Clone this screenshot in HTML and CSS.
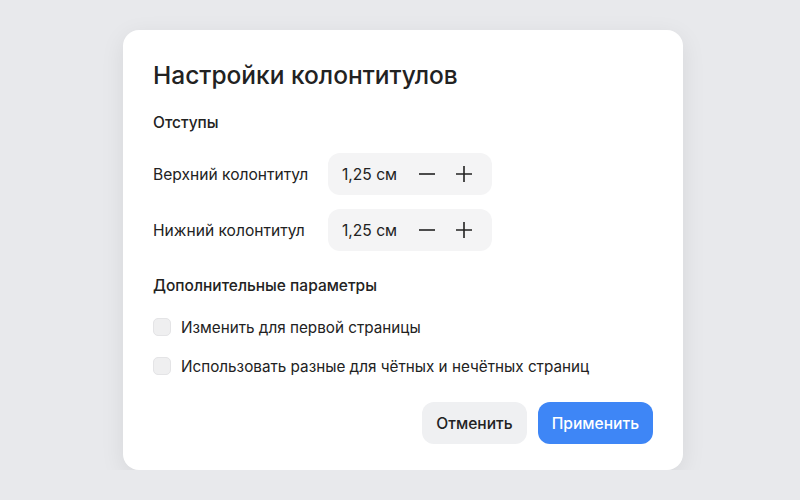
FILE: index.html
```html
<!DOCTYPE html>
<html lang="ru">
<head>
  <meta charset="UTF-8" />
  <meta name="viewport" content="width=device-width, initial-scale=1.0"/>
  <title>Настройки колонтитулов</title>
  <link rel="stylesheet" href="styles.css">
</head>
<body>
  <div class="dialog">
    <h2 class="dialog-title">Настройки колонтитулов</h2>

    <h3 class="section-title">Отступы</h3>

    <div class="margin-rows">
      <div class="margin-row">
        <span class="margin-label">Верхний колонтитул</span>
        <div class="stepper">
          <span class="stepper-value">1,25 см</span>
          <button class="stepper-btn" aria-label="Уменьшить">
            <svg width="18" height="18" viewBox="0 0 18 18"><path d="M1 9h16" stroke="#222" stroke-width="1.6" fill="none"/></svg>
          </button>
          <button class="stepper-btn" aria-label="Увеличить">
            <svg width="18" height="18" viewBox="0 0 18 18"><path d="M1 9h16M9 1v16" stroke="#222" stroke-width="1.6" fill="none"/></svg>
          </button>
        </div>
      </div>

      <div class="margin-row">
        <span class="margin-label">Нижний колонтитул</span>
        <div class="stepper">
          <span class="stepper-value">1,25 см</span>
          <button class="stepper-btn" aria-label="Уменьшить">
            <svg width="18" height="18" viewBox="0 0 18 18"><path d="M1 9h16" stroke="#222" stroke-width="1.6" fill="none"/></svg>
          </button>
          <button class="stepper-btn" aria-label="Увеличить">
            <svg width="18" height="18" viewBox="0 0 18 18"><path d="M1 9h16M9 1v16" stroke="#222" stroke-width="1.6" fill="none"/></svg>
          </button>
        </div>
      </div>
    </div>

    <h3 class="section-title extra">Дополнительные параметры</h3>

    <div class="options">
      <label class="option">
        <span class="checkbox"></span>
        <span>Изменить для первой страницы</span>
      </label>
      <label class="option">
        <span class="checkbox"></span>
        <span>Использовать разные для чётных и нечётных страниц</span>
      </label>
    </div>

    <div class="actions">
      <button class="btn btn-cancel">Отменить</button>
      <button class="btn btn-apply">Применить</button>
    </div>
  </div>
</body>
</html>
```

FILE: styles.css
```css
body {
  font-family: Inter, 'Noto Sans', sans-serif;
  background-color: #e8e9ec;
  margin: 0;
  padding: 0;
  color: #222;
}

.dialog {
  box-sizing: border-box;
  width: 560px;
  height: 440px;
  margin: 30px 0 0 123px;
  background: #fff;
  padding: 29px 30px 26px;
  border-radius: 16px;
  box-shadow: 0 6px 24px rgba(0, 0, 0, 0.08);
  display: flex;
  flex-direction: column;
}

.dialog-title {
  margin: 0;
  font-size: 24.5px;
  line-height: 32px;
  font-weight: 500;
  color: #222;
}

.section-title {
  margin: 22px 0 0;
  font-size: 15.5px;
  line-height: 20px;
  font-weight: 500;
}

.section-title.extra {
  margin-top: 25px;
}

.margin-rows {
  display: flex;
  flex-direction: column;
  gap: 14px;
  margin-top: 20px;
}

.margin-row {
  display: flex;
  align-items: center;
}

.margin-label {
  width: 175px;
  font-size: 15.6px;
}

.stepper {
  display: flex;
  align-items: center;
  width: 164px;
  height: 42px;
  box-sizing: border-box;
  padding: 0 10px 0 14px;
  background-color: #f4f4f5;
  border-radius: 12px;
}

.stepper-value {
  font-size: 15.6px;
  width: 66px;
}

.stepper-btn {
  border: none;
  background: none;
  padding: 0;
  width: 37px;
  height: 24px;
  display: flex;
  align-items: center;
  justify-content: center;
  cursor: pointer;
}

.options {
  display: flex;
  flex-direction: column;
  gap: 15px;
  margin-top: 19px;
}

.option {
  display: flex;
  align-items: center;
  gap: 10px;
  height: 24px;
  font-size: 15.25px;
}

.checkbox {
  width: 18px;
  height: 18px;
  box-sizing: border-box;
  border-radius: 5px;
  background-color: #efeff0;
  border: 1px solid #e4e4e6;
}

.actions {
  display: flex;
  justify-content: flex-end;
  gap: 11px;
  margin-top: auto;
}

.btn {
  height: 42px;
  border: none;
  border-radius: 12px;
  padding: 0 14px;
  font-family: inherit;
  font-size: 15.6px;
  font-weight: 500;
  cursor: pointer;
}

.btn-cancel {
  background-color: #eff0f2;
  color: #222;
}

.btn-apply {
  background-color: #3e86f6;
  color: #fff;
}
```
